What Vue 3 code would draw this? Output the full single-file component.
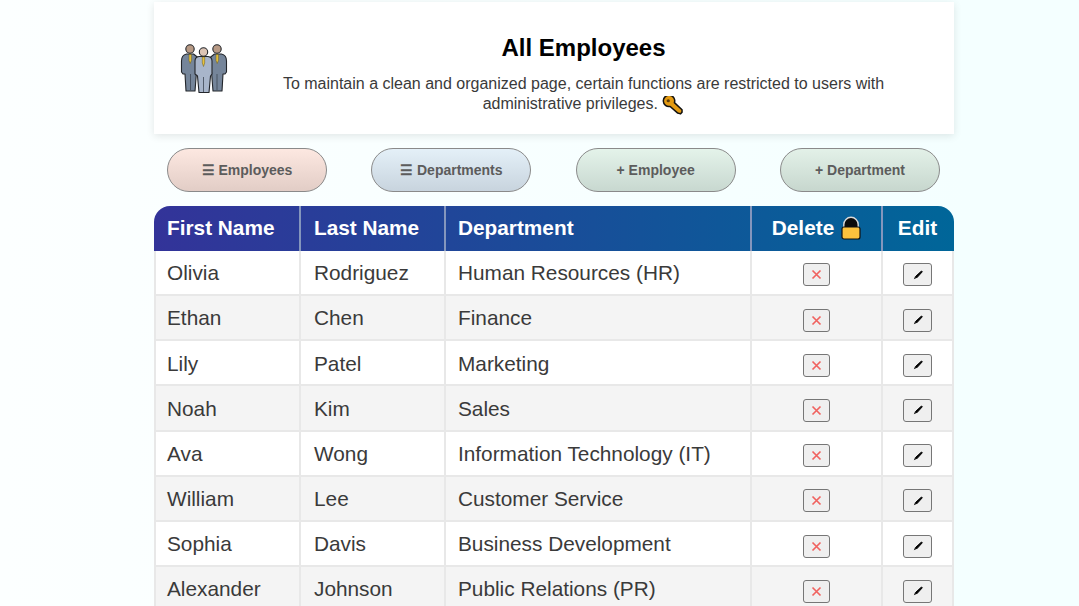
<template>
  <div class="page">
    <header class="intro">
      <svg class="staff" width="48" height="50" viewBox="0 0 48 50">
        <g stroke="#23262b" stroke-width="1.100" stroke-linejoin="round">
          <circle cx="10" cy="5" r="4.200" fill="#b89a85" />
          <circle cx="37" cy="5" r="4.200" fill="#b89a85" />
          <path d="M1.500 17q0-6 5-7h7l5 4v12l-2 2-1.500 19H6L5 30H3l-1.500-2z" fill="#75859a" />
          <path d="M46.500 17q0-6-5-7h-7l-5 4v12l2 2 1.500 19H42l1-17h2l1.500-2z" fill="#75859a" />
          <circle cx="23.500" cy="8" r="4.200" fill="#dcc4b5" />
          <path d="M15 17q0-4 4-4.500h9q4 .5 4 4.500v13l-1.500 2-1.500 16.500h-10L17.500 32 15 30z" fill="#a8b5ca" />
        </g>
        <path d="M9 10.500h2.400v6L10.200 19.500 9 16.500zM36 10.500h2.400v6l-1.200 3-1.200-3zM22.300 13h2.400v6l-1.200 3.500-1.200-3.500z" fill="#e7c23c" stroke="#6b5a1a" stroke-width=".5" />
        <path d="M23.500 33v15M10.500 30v16M37 30v16" stroke="#3d4654" stroke-width=".8" />
      </svg>
      <div class="intro-text">
        <h1>All Employees</h1>
        <p>
          To maintain a clean and organized page, certain functions are restricted to users with administrative privileges.
          <svg class="key" width="22" height="20" viewBox="0 0 22 20">
            <path d="M20.500 14.500 12.500 7A6 6 0 1 0 8 11l8 7 3 .8 1.500-1.800z" fill="#e39a12" stroke="#111" stroke-width="1.600" stroke-linejoin="round" />
            <circle cx="6" cy="5" r="1.700" fill="#5b3b08" />
          </svg>
        </p>
      </div>
    </header>

    <nav class="actions">
      <button v-for="a in actions" :key="a.label" class="act" :class="a.tone">{{ a.label }}</button>
    </nav>

    <table class="staff-table">
      <thead>
        <tr>
          <th class="c-first">First Name</th>
          <th class="c-last">Last Name</th>
          <th class="c-dept">Department</th>
          <th class="c-del">
            <span class="del-head">
              Delete
              <svg width="20" height="24" viewBox="0 0 20 24">
                <path d="M2.800 12V8.500a7.200 7.200 0 0 1 14.400 0V12z" fill="#0b0b0b" stroke="#d9d9d9" stroke-width="1.400" />
                <rect x="1" y="11" width="18" height="12" rx="2" fill="#fcc23d" stroke="#111" stroke-width="1.200" />
              </svg>
            </span>
          </th>
          <th class="c-edit">Edit</th>
        </tr>
      </thead>
      <tbody>
        <tr v-for="e in employees" :key="e[0]">
          <td>{{ e[0] }}</td>
          <td>{{ e[1] }}</td>
          <td>{{ e[2] }}</td>
          <td class="mid">
            <button class="row-btn del">
              <svg width="11" height="11" viewBox="0 0 11 11"><path d="M1.500 1.500l8 8M9.500 1.500l-8 8" stroke="#f0625f" stroke-width="1.700" /></svg>
            </button>
          </td>
          <td class="mid">
            <button class="row-btn pen">
              <svg width="12" height="12" viewBox="0 0 12 12"><path d="M9.500 2l.8.8-5.500 6L3.500 7.500z" fill="#000" stroke="#000" stroke-width="1" /><path d="M3 7.500 1.800 10.200 4.500 9z" fill="#000" /></svg>
            </button>
          </td>
        </tr>
      </tbody>
    </table>
  </div>
</template>

<script setup>
const actions = [
  { label: '☰ Employees', tone: 'rose' },
  { label: '☰ Departments', tone: 'blue' },
  { label: '+ Employee', tone: 'mint' },
  { label: '+ Department', tone: 'sage' },
]

const employees = [
  ['Olivia', 'Rodriguez', 'Human Resources (HR)'],
  ['Ethan', 'Chen', 'Finance'],
  ['Lily', 'Patel', 'Marketing'],
  ['Noah', 'Kim', 'Sales'],
  ['Ava', 'Wong', 'Information Technology (IT)'],
  ['William', 'Lee', 'Customer Service'],
  ['Sophia', 'Davis', 'Business Development'],
  ['Alexander', 'Johnson', 'Public Relations (PR)'],
]
</script>

<style>
html, body { height: 100%; overflow: hidden; }
body { background: linear-gradient(to right, #fcffff, #f4ffff 90%); }
</style>

<style scoped>
.page { width: 800px; margin-left: 154px; padding-top: 2px; font-family: 'Liberation Sans', Arial, sans-serif; }

.intro { height: 132px; display: flex; align-items: center; background: #fff; box-shadow: 0 2px 8px rgba(0,0,0,.1); padding: 0 70px 0 26px; box-sizing: border-box; }
.staff { flex: none; margin-top: 1px; }
.intro-text { flex: 1; padding: 0 0 0 30px; text-align: center; margin-right: -25px; margin-top: 12px; }
h1 { margin: 0 0 12px; font-size: 24px; line-height: 28px; color: #000; }
p { margin: 0; font-size: 16px; line-height: 20px; color: #3a3a3a; }
.key { vertical-align: -3px; height: 19px; margin-bottom: -3px; }

.actions { display: flex; justify-content: space-between; padding: 14px 14px 14px 13px; }
.act { width: 160px; height: 44px; border: 1px solid #8a8a8a; border-radius: 22px; font: bold 14px 'Liberation Sans', Arial, sans-serif; color: #5c5c5c; }
.rose { background: linear-gradient(#fde8e1, #e2cdc6); }
.blue { background: linear-gradient(#e4f0f8, #c8d4de); }
.mint { background: linear-gradient(#e4f3ea, #c8d8d0); }
.sage { background: linear-gradient(#e3f1e8, #c7d7ce); }

.staff-table { width: 800px; table-layout: fixed; border-collapse: separate; border-spacing: 0; font-size: 20.800px; color: #3a3a3a; }
thead tr { background: linear-gradient(to right, #333399, #006699); }
th { height: 44.800px; padding: 0 12px 1px 13px; box-sizing: border-box; text-align: left; color: #fff; font-size: 20.800px; border-right: 2px solid #8496bd; }
th:last-child { border-right: 0; text-align: center; padding: 0 2px 1px 0; }
.c-first { width: 147px; border-top-left-radius: 16px; }
.c-last { width: 145px; }
.c-dept { width: 306px; padding-left: 12px; }
.c-del { width: 131px; text-align: center; padding: 0 0 1px; }
.c-edit { width: 71px; border-top-right-radius: 16px; }
.del-head { display: inline-flex; align-items: center; gap: 7px; }

td { height: 45.200px; padding: 1.500px 12px 0 13px; box-sizing: border-box; background: #fff; border-right: 2px solid #e8e8e8; border-bottom: 2px solid #e8e8e8; }
td:first-child { border-left: 2px solid #e8e8e8; padding-left: 11px; }
td:nth-child(3) { padding-left: 12px; }
tbody tr:nth-child(even) td { background: #f4f4f4; }
td.mid { text-align: center; padding: 3px 0 0; }

.row-btn { display: inline-flex; align-items: center; justify-content: center; height: 23px; padding: 0; background: #efefef; border: 1px solid #767676; border-radius: 3px; vertical-align: middle; }
.del { width: 27px; }
.pen { width: 29px; }
</style>
